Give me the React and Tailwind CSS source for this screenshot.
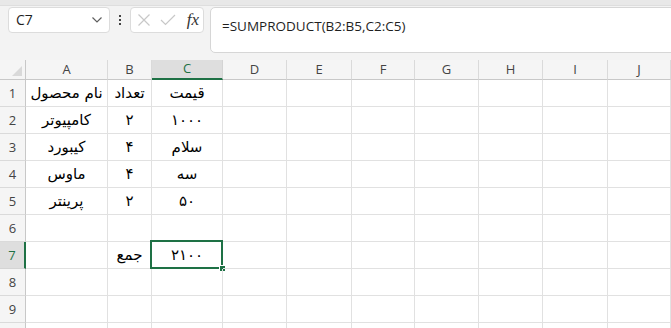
import React from "react";

const colWidths = ["26px", "82px", "44px", "71px", "64px", "65px", "63px", "64px", "64px", "65px", "63px"];
const cols = ["A", "B", "C", "D", "E", "F", "G", "H", "I", "J"];

const data = [
    ["نام محصول", "تعداد", "قیمت"],
    ["کامپیوتر", "۲", "۱۰۰۰"],
    ["کیبورد", "۴", "سلام"],
    ["ماوس", "۴", "سه"],
    ["پرینتر", "۲", "۵۰"],
    ["", "", ""],
    ["", "جمع", "۲۱۰۰"],
    ["", "", ""],
    ["", "", ""],
    ["", "", ""],
];

function Chevron() {
    return (
        <svg width="12" height="8" viewBox="0 0 12 8" fill="none">
            <path d="M1.5 1.5 L6 6 L10.5 1.5" stroke="#5f5f5f" strokeWidth="1.2" />
        </svg>
    );
}

export default function App() {
    return (
        <div className="w-[671px] h-[328px] overflow-hidden bg-[#f3f3f3] font-['Open_Sans',sans-serif]">
            {/* Top strip */}
            <div className="h-[6px] bg-[#e8e8e8] border-b border-[#dedede]" />

            {/* Formula toolbar */}
            <div className="h-[54px] flex items-start pt-[1px] pl-[8px]">
                <div className="w-[102px] h-[26px] bg-white border border-[#dcdcdc] rounded-[4px] flex items-center justify-between pl-[7px] pr-[6px]">
                    <span className="text-[14px] text-[#1f1f1f] leading-none">C7</span>
                    <Chevron />
                </div>
                <div className="w-[20px] h-[26px] flex flex-col items-center justify-center gap-[2px]">
                    <span className="w-[2px] h-[2px] bg-[#444]" />
                    <span className="w-[2px] h-[2px] bg-[#444]" />
                    <span className="w-[2px] h-[2px] bg-[#444]" />
                </div>
                <div className="w-[74px] h-[26px] bg-white border border-[#dcdcdc] rounded-[4px] flex items-center pl-[6px] pr-[4px]">
                    <svg width="14" height="14" viewBox="0 0 14 14" fill="none">
                        <path d="M1.5 1.5 L12.5 12.5 M12.5 1.5 L1.5 12.5" stroke="#c8c8c8" strokeWidth="1.2" />
                    </svg>
                    <svg className="ml-[9px]" width="16" height="12" viewBox="0 0 16 12" fill="none">
                        <path d="M1 6 L5.5 10.5 L15 1" stroke="#c8c8c8" strokeWidth="1.2" />
                    </svg>
                    <span className="ml-auto font-['Liberation_Serif',serif] italic text-[17px] text-[#333] leading-none pb-[2px]">fx</span>
                </div>
                <div className="ml-[6px] flex-1 -mr-[6px] h-[46px] bg-white border border-[#d6d6d6] rounded-[5px] pl-[11px] pt-[5px]">
                    <span className="text-[13.5px] text-[#1f1f1f]">=SUMPRODUCT(B2:B5,C2:C5)</span>
                </div>
            </div>

            {/* Sheet grid */}
            <div
                className="grid grid-cols-[26px_82px_44px_71px_64px_65px_63px_64px_64px_65px_63px] grid-rows-[20px_repeat(10,27px)] bg-white"
            >
                {/* Corner */}
                <div className="bg-[#f5f5f5] border-r border-b border-[#c8c8c8] relative">
                    <svg className="absolute right-[3px] bottom-[3px]" width="10" height="10" viewBox="0 0 10 10">
                        <path d="M10 0 L10 10 L0 10 Z" fill="#d9d9d9" />
                    </svg>
                </div>
                {cols.map((c) =>
                    c === "C" ? (
                        <div key={c} className="bg-[#dedede] border-r border-[#d4d4d4] border-b-2 border-b-[#1e7145] flex items-center justify-center text-[13px] text-[#1e7145]">
                            {c}
                        </div>
                    ) : (
                        <div key={c} className="bg-[#f5f5f5] border-r border-b border-r-[#dadada] border-b-[#c8c8c8] flex items-center justify-center text-[13px] text-[#444]">
                            {c}
                        </div>
                    )
                )}

                {data.map((row, i) => (
                    <React.Fragment key={i}>
                        {i === 6 ? (
                            <div className="bg-[#dedede] border-b border-b-[#d4d4d4] border-r-2 border-r-[#1e7145] flex items-center justify-center text-[13px] text-[#1e7145] pt-[2px]">
                                {i + 1}
                            </div>
                        ) : (
                            <div className="bg-[#f5f5f5] border-r border-b border-r-[#c8c8c8] border-b-[#dadada] flex items-center justify-center text-[13px] text-[#444] pt-[2px]">
                                {i + 1}
                            </div>
                        )}
                        {cols.map((c, j) => {
                            const text = row[j] || "";
                            const selected = i === 6 && c === "C";
                            return (
                                <div
                                    key={c}
                                    dir="rtl"
                                    className="relative border-r border-b border-[#e1e1e1] flex items-center justify-center font-['DejaVu_Sans',sans-serif] text-[15px] text-black whitespace-nowrap pt-[1px]"
                                >
                                    {text}
                                    {selected && (
                                        <>
                                            <div className="absolute left-[-2px] top-[-2px] right-[-1px] bottom-[-1px] border-2 border-[#1e7145]" />
                                            <div className="absolute right-[-4px] bottom-[-4px] w-[7px] h-[7px] bg-[#1e7145] border border-white" />
                                        </>
                                    )}
                                </div>
                            );
                        })}
                    </React.Fragment>
                ))}
            </div>
        </div>
    );
}
